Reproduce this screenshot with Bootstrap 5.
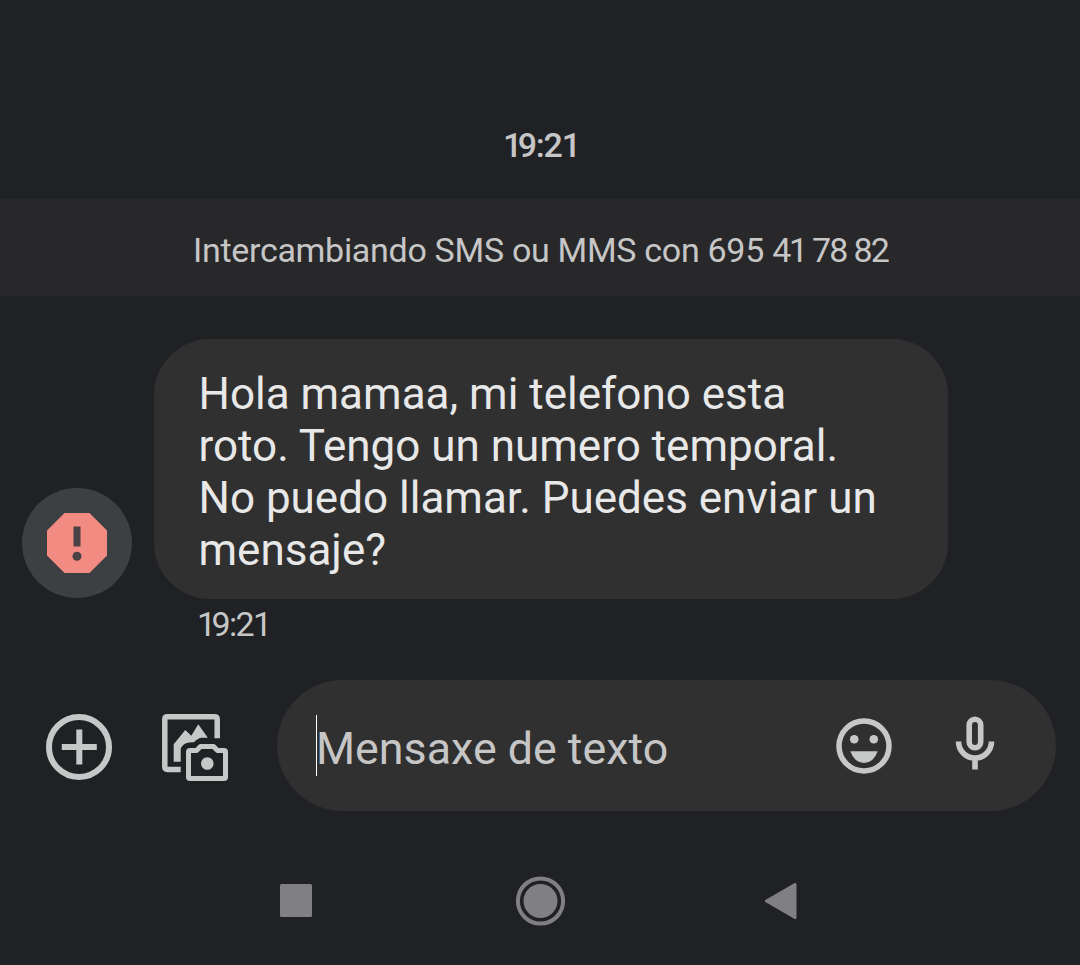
<!DOCTYPE html>
<html lang="gl">
<head>
<meta charset="utf-8">
<title>Mensaxes</title>
<meta name="viewport" content="width=device-width, initial-scale=1">
<link href="https://cdn.jsdelivr.net/npm/bootstrap@5.3.0/dist/css/bootstrap.min.css" rel="stylesheet">
<style>
body{background:#202124;color:#c6c6c6;font-family:Roboto,sans-serif;height:965px;overflow:hidden}
.day{height:199px;padding:124px 0 0 503px;font-size:34px;line-height:42px;font-weight:500;letter-spacing:-1.2px}
.one{letter-spacing:-4.7px}
.notice{height:97px;background:#28282a;font-size:34px;padding:5px 0 0 193px;letter-spacing:-.3px;white-space:pre}
.tight{letter-spacing:-2.3px}
.snug{letter-spacing:-1.7px}
.thread{height:303px;padding:43px 0 0 22px;gap:22px}
.avatar{width:110px;height:110px;background:#3c4043;margin-top:149px}
.bubble{width:794px;height:260px;border-radius:56px;background:#303030;color:#e8e8e8;padding:29px 0 0 44.500px;font-size:44px;line-height:52px;white-space:nowrap}
.stamp{height:81px;padding:4px 0 0 197px;font-size:34px;line-height:42px;letter-spacing:-1.6px}
.composer{height:131px;padding-left:46px}
.add{margin-top:3px}
.gallery{margin:3px 0 0 50px}
.field{width:779px;height:131px;background:#303030;margin-left:49px;padding-left:39px}
.caret{width:1px;height:61px;background:#fff;margin-top:-1px}
.hint{font-size:44.8px;line-height:52px;width:520px;padding-top:6px;margin-left:-1px}
.mic{margin:-5px 61px 0 auto}
.navkeys{height:154px;padding:64px 0 0 280px}
.home{margin-left:203px}
.back{margin-left:199px}
</style>
</head>
<body>
<header class="day"><span class="one">1</span>9:21</header>
<div class="notice d-flex align-items-center"><span>Intercambiando SMS ou MMS con 695 <span class="tight">41 </span><span class="snug">78 82</span></span></div>
<main class="thread d-flex align-items-start">
<div class="avatar rounded-circle d-flex align-items-center justify-content-center flex-shrink-0">
<svg width="60" height="60" viewBox="0 0 60 60"><path fill="#f28b82" d="M17.500 0h25L60 17.500v25L42.500 60h-25L0 42.500v-25z"/><path fill="#4a4144" d="M26.500 13.500h7v20h-7z"/><circle cx="30" cy="43.300" r="4.500" fill="#4a4144"/></svg>
</div>
<div class="bubble">Hola mamaa, mi telefono esta<br>roto. Tengo un numero temporal.<br>No puedo llamar. Puedes enviar un<br>mensaje?</div>
</main>
<div class="stamp"><span class="one">1</span>9:21</div>
<footer class="composer d-flex align-items-center">
<svg class="add flex-shrink-0" width="66" height="66" viewBox="0 0 66 66" fill="none" stroke="#c6c8c7" stroke-width="6"><circle cx="33" cy="33" r="30"/><path d="M33.300 15.500v35M15.800 33h35"/></svg>
<svg class="gallery flex-shrink-0" width="66" height="67" viewBox="0 0 66 67">
<g fill="none" stroke="#c6c8c7" stroke-width="5.500">
<path d="M18.700 55.500H5.500Q2.800 55.500 2.800 52.800V5.500Q2.800 2.800 5.500 2.800H52.500Q55.200 2.800 55.200 5.500V24.300"/>
<path stroke-width="5" stroke-linejoin="round" d="M28 36.500h6.500l4-4h13l4 4H62q1.500 0 1.500 1.500v25q0 1.500-1.500 1.500H28q-1.500 0-1.500-1.500V38q0-1.500 1.500-1.500z"/>
</g>
<path fill="#c6c8c7" d="M11.700 47.700V30.300L23.300 16l6 5.700 7-11.400 9.500 13.400H40q-4 0-8 4.600-8-.5-11 3-2.300 2-2.300 5v11.400z"/>
<circle cx="45.300" cy="49.500" r="6.300" fill="#c6c8c7"/>
</svg>
<div class="field rounded-pill d-flex align-items-center flex-shrink-0"><div class="caret"></div><span class="hint text-nowrap">Mensaxe de texto</span>
<svg width="56" height="56" viewBox="-28 -28 56 56"><circle r="25" fill="none" stroke="#c6c8c7" stroke-width="5.500"/><g fill="#c6c8c7"><circle cx="-9.800" cy="-6.700" r="4.300"/><circle cx="9.800" cy="-6.700" r="4.300"/><path d="M-13.700 5.300h27.400Q9.500 17 0 17T-13.700 5.300z"/></g></svg>
<svg class="mic" width="40" height="54" viewBox="0 0 40 54" fill="none" stroke="#c6c8c7" stroke-width="5.600"><rect x="14.200" y="3.300" width="11.500" height="28.500" rx="5.750"/><path d="M3.500 25.500a16.500 16.500 0 0 0 33 0M20 41v12.500"/></svg>
</div>
</footer>
<nav class="navkeys d-flex align-items-start">
<svg width="33" height="50" viewBox="0 0 33 50"><rect y="9" width="32" height="33" rx="1.500" fill="#808082"/></svg>
<svg class="home" width="50" height="51" viewBox="0 0 50 51"><circle cx="24.500" cy="26" r="22.600" fill="none" stroke="#808082" stroke-width="4"/><circle cx="24.500" cy="26" r="17" fill="#808082"/></svg>
<svg class="back" width="33" height="56" viewBox="0 0 33 56"><path d="M1.500 26 30 9.500v33z" fill="#808082" stroke="#808082" stroke-width="3" stroke-linejoin="round"/></svg>
</nav>
<script src="https://cdn.jsdelivr.net/npm/bootstrap@5.3.0/dist/js/bootstrap.bundle.min.js"></script>
</body>
</html>
